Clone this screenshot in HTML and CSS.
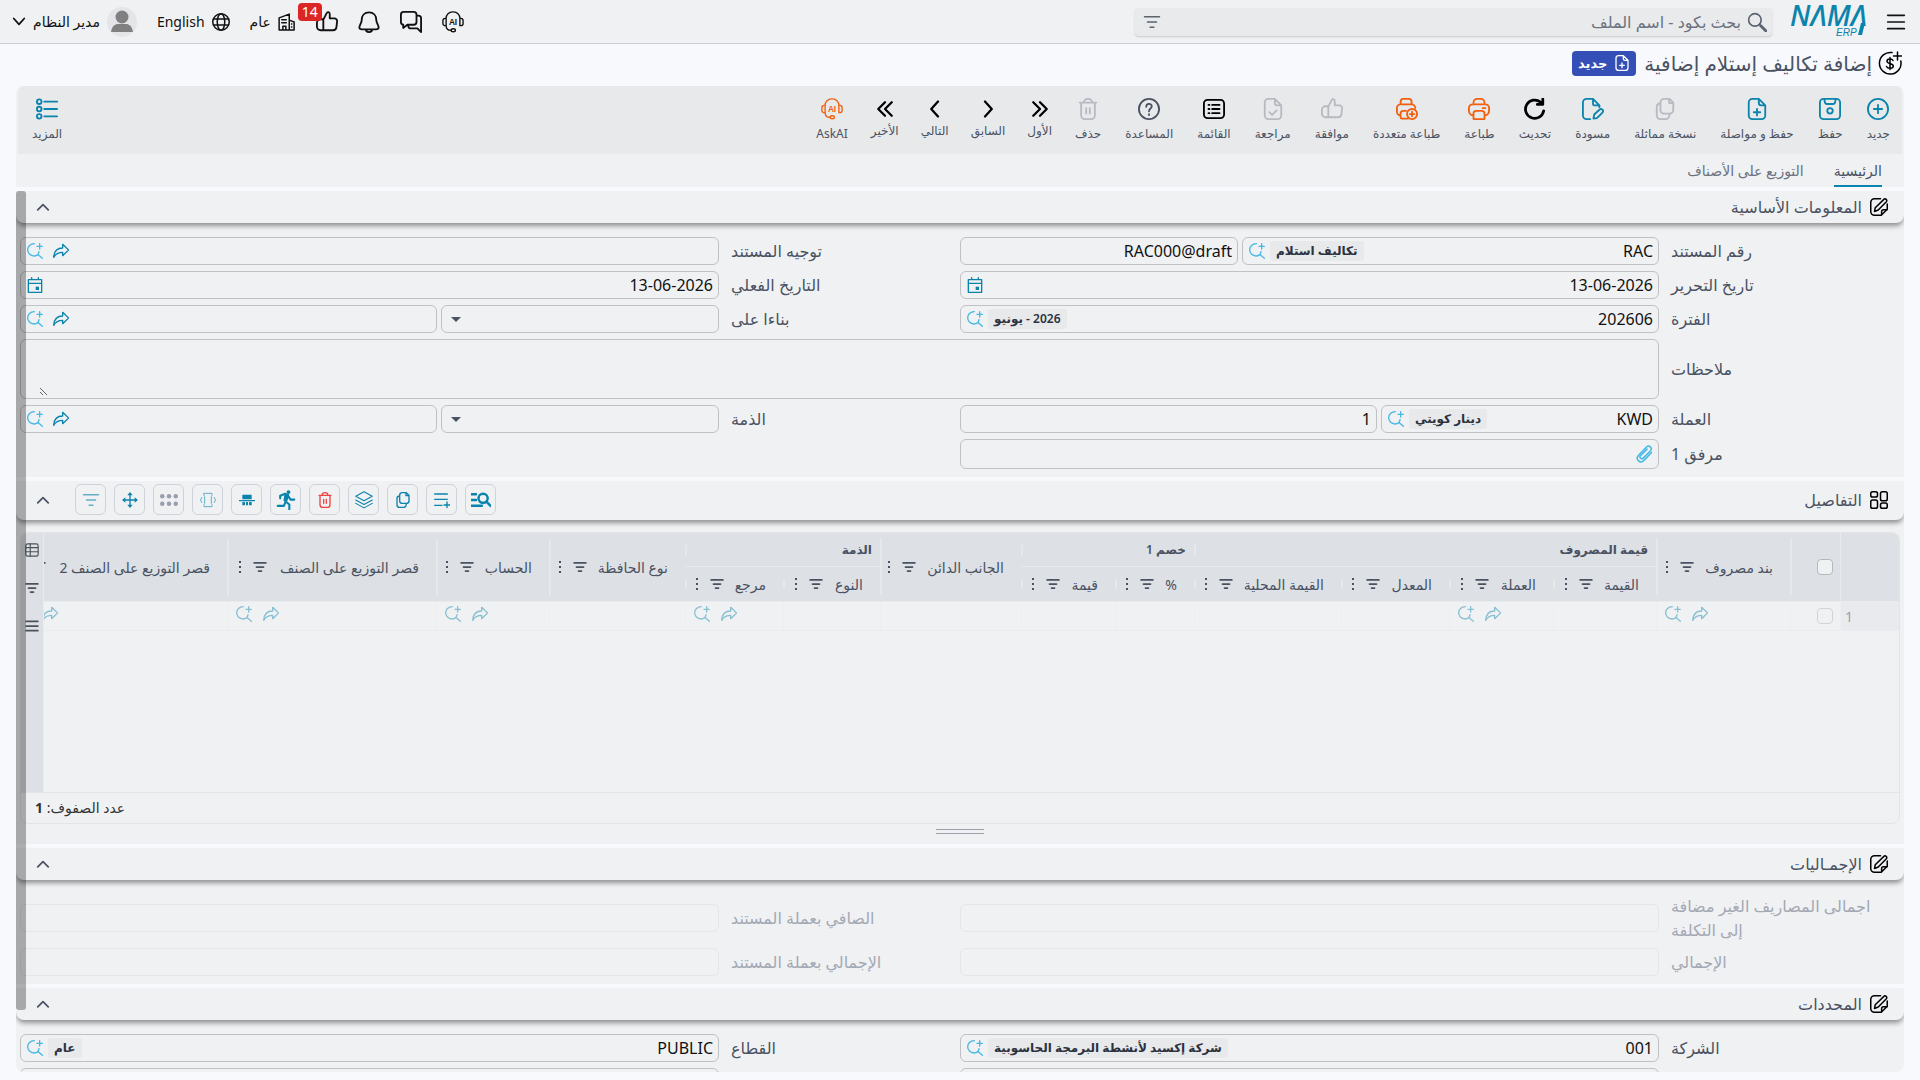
FILE: index.html
```html
<!DOCTYPE html>
<html lang="ar" dir="rtl">
<head>
  <meta charset="UTF-8" />
  <meta name="viewport" content="width=device-width, initial-scale=1" />
  <title>إضافة تكاليف إستلام إضافية</title>
  <link rel="stylesheet" href="styles.css">
</head>
<body>
  <!-- icon sprite -->
  <svg class="sprite" aria-hidden="true">
    <symbol id="i-menu" viewBox="0 0 24 24"><path d="M2 4h20M2 12h20M2 20h20" /></symbol>
    <symbol id="i-search" viewBox="0 0 24 24"><circle cx="9.500" cy="9.500" r="7.500" /><path d="M15 15l1.500 1.500" /><path d="M16.500 16.500l6 6" stroke-width="3.500" /></symbol>
    <symbol id="i-filter" viewBox="0 0 24 24"><path d="M2 5h20M6 12h12M9.500 19h5" /></symbol>
    <symbol id="i-ai" viewBox="0 0 24 24"><path d="M4.500 8.500V8a7 7 0 0 1 7-7h1a7 7 0 0 1 7 7v.500M4.500 8h-1A2.500 2.500 0 0 0 1 10.500v3A2.500 2.500 0 0 0 3.500 16h1zM19.500 8h1a2.500 2.500 0 0 1 2.500 2.500v3a2.500 2.500 0 0 1-2.500 2.500h-1zM4.500 16c0 3 2 5 5.500 5" /><ellipse cx="12.300" cy="21" rx="2.300" ry="1.700" /><text x="12" y="15" text-anchor="middle" class="ai-text">AI</text></symbol>
    <symbol id="i-chat" viewBox="0 0 24 24"><path d="M4 1h11a3 3 0 0 1 3 3v8a3 3 0 0 1-3 3H8l-4.500 3.500V15A3 3 0 0 1 1 12V4a3 3 0 0 1 3-3zM18 5h2a3 3 0 0 1 3 3v15l-4-4h-7a3 3 0 0 1-3-3v-1" /></symbol>
    <symbol id="i-bell" viewBox="0 0 24 24"><path d="M12 1.500c-5 0-8 3.500-8 8.500 0 3-2.500 5.500-2.500 8 0 1.500 1 2 3 2h15c2 0 3-.500 3-2 0-2.500-2.500-5-2.500-8 0-5-3-8.500-8-8.500zM8.500 20c0 4 7 4 7 0" /></symbol>
    <symbol id="i-thumb" viewBox="0 0 24 24"><path d="M8 9.500l3.500-7C12.500.500 15 1 15 3.500V8h5a3 3 0 0 1 3 3.500l-.700 6A4 4 0 0 1 18.500 21H5a4 4 0 0 1-4-4v-4a4 4 0 0 1 4-4h3zM8 9.500V21" /></symbol>
    <symbol id="i-building" viewBox="0 0 24 24"><path d="M1.500 22.500V6.500L15 1.500v21zM15 9.500l6.500 2.500v10.500H1.500M6.500 22.500v-5h4v5M5 9h6M5 13h6M18 14.500h.500M18 18.500h.500" /></symbol>
    <symbol id="i-globe" viewBox="0 0 24 24"><circle cx="12" cy="12" r="11" /><ellipse cx="12" cy="12" rx="5" ry="11" /><path d="M2 8h20M2 16h20" /></symbol>
    <symbol id="i-down" viewBox="0 0 24 24"><path d="M3 6l9 10 9-10" /></symbol>
    <symbol id="i-up" viewBox="0 0 24 24"><path d="M3 17l9-9 9 9" /></symbol>
    <symbol id="i-money" viewBox="0 0 24 24"><path d="M14 1.600A10.800 10.800 0 1 0 22.800 10M19.500 1v8M15.500 5h8M15 9.500c-1-2-6-2-6 .800 0 3 6.300 2 6.300 4.700 0 3-5.500 3-6.800.500M12 6.500v12" /></symbol>
    <symbol id="i-add" viewBox="0 0 24 24"><circle cx="12" cy="12" r="11" /><path d="M12 7.500v9M7.500 12h9" /></symbol>
    <symbol id="i-save" viewBox="0 0 24 24"><path d="M5 1h14a4 4 0 0 1 4 4v14a4 4 0 0 1-4 4H5a4 4 0 0 1-4-4V5a4 4 0 0 1 4-4zM6 1.500c0 4 1 5 3 5h6c2 0 3-1 3-5" /><circle cx="12" cy="14" r="3" /></symbol>
    <symbol id="i-docadd" viewBox="0 0 24 24"><path d="M14 1H7a4 4 0 0 0-4 4v14a4 4 0 0 0 4 4h10a4 4 0 0 0 4-4V8zM14 1v4.500A2.500 2.500 0 0 0 16.500 8H21M12 12v7M8.500 15.500h7" /></symbol>
    <symbol id="i-docok" viewBox="0 0 24 24"><path d="M14 1H7a4 4 0 0 0-4 4v14a4 4 0 0 0 4 4h10a4 4 0 0 0 4-4V8zM14 1v4.500A2.500 2.500 0 0 0 16.500 8H21M8 15.500l3 3 5-5" /></symbol>
    <symbol id="i-copy" viewBox="0 0 24 24"><path d="M11 1h6l4 4v8a4 4 0 0 1-4 4h-6a4 4 0 0 1-4-4V5a4 4 0 0 1 4-4zM16.500 1.500v4H21M7 6c-2.500 0-4 1.500-4 4v9a4 4 0 0 0 4 4h6c2.500 0 4-2 4-6" /></symbol>
    <symbol id="i-draft" viewBox="0 0 24 24"><path d="M19 8h-5.500A1.500 1.500 0 0 1 12 6.500V1H5a4 4 0 0 0-4 4v14a4 4 0 0 0 4 4h4M12 1l7 7v2M12.500 22.500l.800-4.500 6-5.500c2-1.500 5 1 3 3.500l-6 6z" /></symbol>
    <symbol id="i-refresh" viewBox="0 0 24 24"><path d="M21.500 14A10 10 0 1 1 18 4.500l2 1.500M20.500 1v6h-6" /></symbol>
    <symbol id="i-print" viewBox="0 0 24 24"><path d="M6 7V5a4 4 0 0 1 4-4h4a4 4 0 0 1 4 4v2M6 19a5 5 0 0 1-5-5v-3a4 4 0 0 1 4-4h14a4 4 0 0 1 4 4v3a5 5 0 0 1-5 5M9 14h6a3 3 0 0 1 3 3v5.500a.500.500 0 0 1-.500.500h-11a.500.500 0 0 1-.500-.500V17a3 3 0 0 1 3-3zM16 11h3" /></symbol>
    <symbol id="i-printadd" viewBox="0 0 24 24"><path d="M5 7V4a3 3 0 0 1 3-3h6a3 3 0 0 1 3 3v3M5 19a4 4 0 0 1-4-4v-4a4 4 0 0 1 4-4h12a4 4 0 0 1 4 4M11 14H8a3 3 0 0 0-3 3v4a1.500 1.500 0 0 0 1.500 1.500H13" /><circle cx="17.500" cy="17.500" r="5.500" /><path d="M17.500 15v5M15 17.500h5" /></symbol>
    <symbol id="i-list" viewBox="0 0 24 24"><rect x="1" y="2" width="22" height="20" rx="4" /><path d="M10 7.500h8M10 12h8M10 16.500h8M6 7.500h1M6 12h1M6 16.500h1" /></symbol>
    <symbol id="i-help" viewBox="0 0 24 24"><circle cx="12" cy="12" r="11" /><path d="M9 9.500c0-4 6-4 6-.500 0 2.500-3 2.500-3 5.500M12 17.500v1" /></symbol>
    <symbol id="i-trash" viewBox="0 0 24 24"><path d="M3 5h18M7.500 5c.300-2.700 2-4 4.500-4s4.200 1.300 4.500 4M4.500 5v14a4 4 0 0 0 4 4h7a4 4 0 0 0 4-4V5M10 11v6M14 11v6" /></symbol>
    <symbol id="i-first" viewBox="0 0 24 24"><path d="M3 3l9 9-9 9M12 3l9 9-9 9" /></symbol>
    <symbol id="i-prev" viewBox="0 0 24 24"><path d="M8 2l9 10-9 10" /></symbol>
    <symbol id="i-next" viewBox="0 0 24 24"><path d="M16 2L7 12l9 10" /></symbol>
    <symbol id="i-last" viewBox="0 0 24 24"><path d="M12 3l-9 9 9 9M21 3l-9 9 9 9" /></symbol>
    <symbol id="i-more" viewBox="0 0 24 24"><circle cx="3.500" cy="4" r="2.500" /><circle cx="3.500" cy="12" r="2.500" /><circle cx="3.500" cy="20" r="2.500" /><path d="M9 4h14M9 12h14M9 20h14" /></symbol>
    <symbol id="i-edit" viewBox="0 0 24 24"><path d="M14 1H6a5 5 0 0 0-5 5v12a5 5 0 0 0 5 5h9l8-8V8M15.500 22.500V18a2.500 2.500 0 0 1 2.500-2.500h5M6 18l1-5L18.500 1.800c2-2 5 1 3.300 3.200L11 16z" /></symbol>
    <symbol id="i-grid" viewBox="0 0 24 24"><rect x="1" y="1" width="9" height="7" rx="2.500" /><rect x="14" y="1" width="9" height="12" rx="2.500" /><rect x="1" y="12" width="9" height="11" rx="2.500" /><rect x="14" y="16" width="9" height="7" rx="2.500" /></symbol>
    <symbol id="i-lookup" viewBox="0 0 24 24"><path d="M11 1C5 1 1 5 1 10s4 9.500 9.500 9.500c4 0 7-2.500 7.500-6.500M16 17l7 6M19 1v8M15 5h8" /></symbol>
    <symbol id="i-go" viewBox="0 0 24 24"><path d="M14.500 2l9 8.500-9 8.500v-5C8 14 4 16 1 21.500c.500-8 5-14 13.500-14z" /></symbol>
    <symbol id="i-calendar" viewBox="0 0 24 24"><path d="M2 4h20v19H2zM2 9.500h20M7 1v3M17 1v3" /><rect x="13" y="14.500" width="5" height="5" class="solid" /></symbol>
    <symbol id="i-clip" viewBox="0 0 24 24"><path d="M22 10L12 20.500c-5 5-12-1-7.500-6.500L15 3c4-4 9 1 5.500 5L11 17.500c-2.500 2.500-6-1-3.500-3.500L16 5.500" /></symbol>
    <symbol id="i-finder" viewBox="0 0 24 24"><circle cx="14.500" cy="10" r="5.500" /><path d="M18.500 14l5 5M0 5h6M0 12h6M0 19h13" /></symbol>
    <symbol id="i-rowadd" viewBox="0 0 24 24"><path d="M1 3h19M1 11h19M1 20h11M19.500 15v9M15 19.500h9" /></symbol>
    <symbol id="i-layers" viewBox="0 0 24 24"><path d="M12 1l11 6-11 6L1 7zM1 12l11 6 11-6M1 16.500l11 6 11-6" /></symbol>
    <symbol id="i-run" viewBox="0 0 24 24"><circle cx="15" cy="2.500" r="2.300" class="solid" /><path d="M5 10V7l6-2.500 3.500 1.500L12 14l4 3.500V24M11.500 14l-2 5H2M14.500 7l3 4.500H22" stroke-width="2.500" /><path d="M10 5l5 1-2.500 9-3.500-2z" class="solid" /></symbol>
    <symbol id="i-split" viewBox="0 0 24 24"><path d="M5 4h14v7H5zM5 15h4v5H5zM10.500 15h3v5h-3zM15 15h4v5h-4z" class="solid" /><path d="M0 13h24" /></symbol>
    <symbol id="i-fit" viewBox="0 0 24 24"><path d="M6 2h12v3l-1 2v10l1 2v3H6v-3l1-2V7L6 5zM3 8l-2.500 4L3 16M21 8l2.500 4-2.500 4" stroke-width="1.500" /></symbol>
    <symbol id="i-dots" viewBox="0 0 24 24"><g class="solid"><circle cx="3" cy="7" r="3" /><circle cx="12" cy="7" r="3" /><circle cx="21" cy="7" r="3" /><circle cx="3" cy="17" r="3" /><circle cx="12" cy="17" r="3" /><circle cx="21" cy="17" r="3" /></g></symbol>
    <symbol id="i-move" viewBox="0 0 24 24"><path d="M12 3v18M3 12h18" /><path d="M12 0l4 5H8zM12 24l4-5H8zM0 12l5-4v8zM24 12l-5-4v8z" class="solid" /></symbol>
    <symbol id="i-kebab" viewBox="0 0 4 14"><g class="solid"><rect x="1" y="1" width="2" height="2" /><rect x="1" y="6" width="2" height="2" /><rect x="1" y="11" width="2" height="2" /></g></symbol>
    <symbol id="i-columns" viewBox="0 0 24 24"><rect x="1.500" y="1.500" width="21" height="21" rx="3" /><path d="M1.500 8h21M9 1.500v21M1.500 15h21" /></symbol>
  </svg>

  <header class="topbar">
    <button class="icon-btn" aria-label="القائمة الرئيسية"><svg class="icon burger"><use href="#i-menu" /></svg></button>
    <a class="logo" href="#" aria-label="NAMA ERP">
      <svg viewBox="0 0 80 28" direction="ltr">
        <text x="0" y="18" class="logo-name">NΛMΛ</text>
        <path d="M71 15h4l-3 12h-4z" />
        <text x="46" y="28" class="logo-sub">ERP</text>
      </svg>
    </a>
    <div class="search">
      <svg class="icon s20"><use href="#i-search" /></svg>
      <input type="text" aria-label="بحث" placeholder="بحث بكود - اسم الملف">
      <button class="icon-btn" aria-label="تصفية"><svg class="icon s18"><use href="#i-filter" /></svg></button>
    </div>
    <nav class="top-actions">
      <button class="icon-btn" aria-label="AI"><svg class="icon s22 thin"><use href="#i-ai" /></svg></button>
      <button class="icon-btn" aria-label="المحادثات"><svg class="icon s22"><use href="#i-chat" /></svg></button>
      <button class="icon-btn" aria-label="التنبيهات"><svg class="icon s22"><use href="#i-bell" /></svg></button>
      <button class="icon-btn likes" aria-label="الموافقات"><svg class="icon s22"><use href="#i-thumb" /></svg><span class="count">14</span></button>
      <button class="top-item"><svg class="icon s18"><use href="#i-building" /></svg>عام</button>
      <button class="top-item"><svg class="icon s18"><use href="#i-globe" /></svg>English</button>
      <button class="top-item">
        <span class="avatar"><svg viewBox="0 0 30 30"><circle cx="15" cy="10" r="6.500" /><path d="M4 25c1-6 4-8 7-8h8c3 0 6 2 7 8z" /></svg></span>
        مدير النظام
        <svg class="icon s14 bold"><use href="#i-down" /></svg>
      </button>
    </nav>
  </header>

  <div class="title-row">
    <svg class="icon s24 thin"><use href="#i-money" /></svg>
    <h1>إضافة تكاليف إستلام إضافية</h1>
    <span class="state"><svg class="icon s16"><use href="#i-docadd" /></svg>جديد</span>
  </div>

  <main class="page">
    <div class="toolbar">
      <button class="tool teal"><svg class="icon s22"><use href="#i-add" /></svg>جديد</button>
      <button class="tool teal"><svg class="icon s22"><use href="#i-save" /></svg>حفظ</button>
      <button class="tool teal"><svg class="icon s22"><use href="#i-docadd" /></svg>حفظ و مواصلة</button>
      <button class="tool off"><svg class="icon s22"><use href="#i-copy" /></svg>نسخة مماثلة</button>
      <button class="tool teal"><svg class="icon s22"><use href="#i-draft" /></svg>مسودة</button>
      <button class="tool"><svg class="icon s22 bold"><use href="#i-refresh" /></svg>تحديث</button>
      <button class="tool orange"><svg class="icon s22"><use href="#i-print" /></svg>طباعة</button>
      <button class="tool orange"><svg class="icon s22"><use href="#i-printadd" /></svg>طباعة متعددة</button>
      <button class="tool off"><svg class="icon s22"><use href="#i-thumb" /></svg>موافقة</button>
      <button class="tool off"><svg class="icon s22"><use href="#i-docok" /></svg>مراجعة</button>
      <button class="tool"><svg class="icon s22"><use href="#i-list" /></svg>القائمة</button>
      <button class="tool grey"><svg class="icon s22"><use href="#i-help" /></svg>المساعدة</button>
      <button class="tool off"><svg class="icon s22"><use href="#i-trash" /></svg>حذف</button>
      <button class="tool nav"><svg class="icon s18 bold"><use href="#i-first" /></svg>الأول</button>
      <button class="tool nav"><svg class="icon s18 bold"><use href="#i-prev" /></svg>السابق</button>
      <button class="tool nav"><svg class="icon s18 bold"><use href="#i-next" /></svg>التالي</button>
      <button class="tool nav"><svg class="icon s18 bold"><use href="#i-last" /></svg>الأخير</button>
      <button class="tool orange"><svg class="icon s22 thin"><use href="#i-ai" /></svg>AskAI</button>
      <button class="tool teal more"><svg class="icon s22"><use href="#i-more" /></svg>المزيد</button>
    </div>

    <nav class="tabs">
      <a href="#" class="tab active">الرئيسية</a>
      <a href="#" class="tab">التوزيع على الأصناف</a>
    </nav>

    <div class="scroller">
      <section class="section">
        <div class="section-head">
          <svg class="icon s18"><use href="#i-edit" /></svg>
          <h2>المعلومات الأساسية</h2>
          <button class="icon-btn collapse" aria-label="طي"><svg class="icon s14"><use href="#i-up" /></svg></button>
        </div>
        <div class="form">
          <div class="row">
            <label for="book">رقم المستند</label>
            <div class="fields">
              <div class="box wide"><input id="book" type="text" value="RAC"><span class="chip">تكاليف استلام</span><button class="icon-btn sky" aria-label="بحث"><svg class="icon s16"><use href="#i-lookup" /></svg></button></div>
              <div class="box"><input type="text" aria-label="كود المستند" value="RAC000@draft"></div>
            </div>
          </div>
          <div class="row">
            <label for="term">توجيه المستند</label>
            <div class="fields">
              <div class="box"><input id="term" type="text"><button class="icon-btn teal" aria-label="فتح"><svg class="icon s16"><use href="#i-go" /></svg></button><button class="icon-btn sky" aria-label="بحث"><svg class="icon s16"><use href="#i-lookup" /></svg></button></div>
            </div>
          </div>
          <div class="row">
            <label for="issue">تاريخ التحرير</label>
            <div class="fields">
              <div class="box"><input id="issue" type="text" value="13-06-2026"><button class="icon-btn teal" aria-label="التقويم"><svg class="icon s16"><use href="#i-calendar" /></svg></button></div>
            </div>
          </div>
          <div class="row">
            <label for="actual">التاريخ الفعلي</label>
            <div class="fields">
              <div class="box"><input id="actual" type="text" value="13-06-2026"><button class="icon-btn teal" aria-label="التقويم"><svg class="icon s16"><use href="#i-calendar" /></svg></button></div>
            </div>
          </div>
          <div class="row">
            <label for="period">الفترة</label>
            <div class="fields">
              <div class="box"><input id="period" type="text" value="202606"><span class="chip">2026 - يونيو</span><button class="icon-btn sky" aria-label="بحث"><svg class="icon s16"><use href="#i-lookup" /></svg></button></div>
            </div>
          </div>
          <div class="row">
            <label for="from">بناءا على</label>
            <div class="fields">
              <div class="box drop"><select id="from"><option></option></select></div>
              <div class="box wide"><input type="text" aria-label="كود المصدر"><button class="icon-btn teal" aria-label="فتح"><svg class="icon s16"><use href="#i-go" /></svg></button><button class="icon-btn sky" aria-label="بحث"><svg class="icon s16"><use href="#i-lookup" /></svg></button></div>
            </div>
          </div>
          <div class="row full">
            <label for="notes">ملاحظات</label>
            <div class="fields">
              <div class="box area"><textarea id="notes"></textarea></div>
            </div>
          </div>
          <div class="row">
            <label for="currency">العملة</label>
            <div class="fields">
              <div class="box"><input id="currency" type="text" value="KWD"><span class="chip">دينار كويتي</span><button class="icon-btn sky" aria-label="بحث"><svg class="icon s16"><use href="#i-lookup" /></svg></button></div>
              <div class="box wide"><input type="text" aria-label="المعدل" value="1"></div>
            </div>
          </div>
          <div class="row">
            <label for="subsidiary">الذمة</label>
            <div class="fields">
              <div class="box drop"><select id="subsidiary"><option></option></select></div>
              <div class="box wide"><input type="text" aria-label="كود الذمة"><button class="icon-btn teal" aria-label="فتح"><svg class="icon s16"><use href="#i-go" /></svg></button><button class="icon-btn sky" aria-label="بحث"><svg class="icon s16"><use href="#i-lookup" /></svg></button></div>
            </div>
          </div>
          <div class="row">
            <label for="attach">مرفق 1</label>
            <div class="fields">
              <div class="box attach"><button id="attach" class="icon-btn sky" aria-label="إرفاق"><svg class="icon s18"><use href="#i-clip" /></svg></button></div>
            </div>
          </div>
        </div>
      </section>

      <section class="section">
        <div class="section-head tall">
          <svg class="icon s18"><use href="#i-grid" /></svg>
          <h2>التفاصيل</h2>
          <div class="grid-tools">
            <button class="sq" aria-label="بحث"><svg class="icon s20 bold"><use href="#i-finder" /></svg></button>
            <button class="sq" aria-label="سطر جديد"><svg class="icon s16"><use href="#i-rowadd" /></svg></button>
            <button class="sq" aria-label="نسخ"><svg class="icon s16"><use href="#i-copy" /></svg></button>
            <button class="sq" aria-label="طبقات"><svg class="icon s18 thin"><use href="#i-layers" /></svg></button>
            <button class="sq red" aria-label="حذف"><svg class="icon s16"><use href="#i-trash" /></svg></button>
            <button class="sq" aria-label="تشغيل"><svg class="icon s20"><use href="#i-run" /></svg></button>
            <button class="sq" aria-label="تقسيم"><svg class="icon s16"><use href="#i-split" /></svg></button>
            <button class="sq dim" aria-label="ملاءمة"><svg class="icon s16"><use href="#i-fit" /></svg></button>
            <button class="sq mute" aria-label="خيارات"><svg class="icon s18"><use href="#i-dots" /></svg></button>
            <button class="sq" aria-label="نقل"><svg class="icon s16"><use href="#i-move" /></svg></button>
            <button class="sq dim" aria-label="تصفية"><svg class="icon s18"><use href="#i-filter" /></svg></button>
          </div>
          <button class="icon-btn collapse" aria-label="طي"><svg class="icon s14"><use href="#i-up" /></svg></button>
        </div>
        <div class="grid-wrap">
          <div class="grid">
            <div class="grid-main">
              <div class="grid-view">
                <table>
                  <colgroup>
                    <col class="c-num"><col class="c-check"><col class="c-item"><col class="c-value"><col class="c-currency"><col class="c-rate"><col class="c-local"><col class="c-percent"><col class="c-disc"><col class="c-credit"><col class="c-type"><col class="c-ref"><col class="c-folder"><col class="c-account"><col class="c-limit"><col class="c-limit2">
                  </colgroup>
                  <thead>
                    <tr>
                      <th rowspan="2" class="num" aria-label="رقم"></th>
                      <th rowspan="2" class="check"><input type="checkbox" aria-label="تحديد الكل"></th>
                      <th rowspan="2" class="col"><div class="th"><span>بند مصروف</span><svg class="icon s14"><use href="#i-filter" /></svg><svg class="kebab"><use href="#i-kebab" /></svg></div></th>
                      <th colspan="4" class="group">قيمة المصروف</th>
                      <th colspan="2" class="group">خصم 1</th>
                      <th rowspan="2" class="col"><div class="th"><span>الجانب الدائن</span><svg class="icon s14"><use href="#i-filter" /></svg><svg class="kebab"><use href="#i-kebab" /></svg></div></th>
                      <th colspan="2" class="group">الذمة</th>
                      <th rowspan="2" class="col"><div class="th"><span>نوع الحافظة</span><svg class="icon s14"><use href="#i-filter" /></svg><svg class="kebab"><use href="#i-kebab" /></svg></div></th>
                      <th rowspan="2" class="col"><div class="th"><span>الحساب</span><svg class="icon s14"><use href="#i-filter" /></svg><svg class="kebab"><use href="#i-kebab" /></svg></div></th>
                      <th rowspan="2" class="col"><div class="th"><span>قصر التوزيع على الصنف</span><svg class="icon s14"><use href="#i-filter" /></svg><svg class="kebab"><use href="#i-kebab" /></svg></div></th>
                      <th rowspan="2" class="col"><div class="th"><span>قصر التوزيع على الصنف 2</span><svg class="icon s14"><use href="#i-filter" /></svg><svg class="kebab"><use href="#i-kebab" /></svg></div></th>
                    </tr>
                    <tr>
                      <th class="sub"><div class="th"><span>القيمة</span><svg class="icon s14"><use href="#i-filter" /></svg><svg class="kebab"><use href="#i-kebab" /></svg></div></th>
                      <th class="sub"><div class="th"><span>العملة</span><svg class="icon s14"><use href="#i-filter" /></svg><svg class="kebab"><use href="#i-kebab" /></svg></div></th>
                      <th class="sub"><div class="th"><span>المعدل</span><svg class="icon s14"><use href="#i-filter" /></svg><svg class="kebab"><use href="#i-kebab" /></svg></div></th>
                      <th class="sub"><div class="th"><span>القيمة المحلية</span><svg class="icon s14"><use href="#i-filter" /></svg><svg class="kebab"><use href="#i-kebab" /></svg></div></th>
                      <th class="sub"><div class="th"><span>%</span><svg class="icon s14"><use href="#i-filter" /></svg><svg class="kebab"><use href="#i-kebab" /></svg></div></th>
                      <th class="sub"><div class="th"><span>قيمة</span><svg class="icon s14"><use href="#i-filter" /></svg><svg class="kebab"><use href="#i-kebab" /></svg></div></th>
                      <th class="sub"><div class="th"><span>النوع</span><svg class="icon s14"><use href="#i-filter" /></svg><svg class="kebab"><use href="#i-kebab" /></svg></div></th>
                      <th class="sub"><div class="th"><span>مرجع</span><svg class="icon s14"><use href="#i-filter" /></svg><svg class="kebab"><use href="#i-kebab" /></svg></div></th>
                    </tr>
                  </thead>
                  <tbody>
                    <tr>
                      <td class="num">1</td>
                      <td class="check"><input type="checkbox" aria-label="تحديد السطر"></td>
                      <td><div class="ref"><svg class="icon s16"><use href="#i-go" /></svg><svg class="icon s16"><use href="#i-lookup" /></svg></div></td>
                      <td></td>
                      <td><div class="ref"><svg class="icon s16"><use href="#i-go" /></svg><svg class="icon s16"><use href="#i-lookup" /></svg></div></td>
                      <td></td>
                      <td></td>
                      <td></td>
                      <td></td>
                      <td></td>
                      <td></td>
                      <td><div class="ref"><svg class="icon s16"><use href="#i-go" /></svg><svg class="icon s16"><use href="#i-lookup" /></svg></div></td>
                      <td></td>
                      <td><div class="ref"><svg class="icon s16"><use href="#i-go" /></svg><svg class="icon s16"><use href="#i-lookup" /></svg></div></td>
                      <td><div class="ref"><svg class="icon s16"><use href="#i-go" /></svg><svg class="icon s16"><use href="#i-lookup" /></svg></div></td>
                      <td><div class="ref"><svg class="icon s16"><use href="#i-go" /></svg><svg class="icon s16"><use href="#i-lookup" /></svg></div></td>
                    </tr>
                  </tbody>
                </table>
              </div>
              <div class="side-bar">
                <button class="icon-btn" aria-label="الأعمدة"><svg class="icon s14"><use href="#i-columns" /></svg></button>
                <button class="icon-btn" aria-label="التصفية"><svg class="icon s14 bold"><use href="#i-filter" /></svg></button>
                <button class="icon-btn" aria-label="القائمة"><svg class="icon s14 bold"><use href="#i-menu" /></svg></button>
              </div>
            </div>
            <div class="grid-foot">عدد الصفوف: <b>1</b></div>
          </div>
          <div class="handle"></div>
        </div>
      </section>

      <section class="section">
        <div class="section-head">
          <svg class="icon s18"><use href="#i-edit" /></svg>
          <h2>الإجمـاليات</h2>
          <button class="icon-btn collapse" aria-label="طي"><svg class="icon s14"><use href="#i-up" /></svg></button>
        </div>
        <div class="form disabled">
          <div class="row"><label for="t1">اجمالى المصاريف الغير مضافة إلى التكلفة</label><div class="fields"><div class="box"><input id="t1" type="text" disabled></div></div></div>
          <div class="row"><label for="t2">الصافي بعملة المستند</label><div class="fields"><div class="box"><input id="t2" type="text" disabled></div></div></div>
          <div class="row"><label for="t3">الإجمالي</label><div class="fields"><div class="box"><input id="t3" type="text" disabled></div></div></div>
          <div class="row"><label for="t4">الإجمالي بعملة المستند</label><div class="fields"><div class="box"><input id="t4" type="text" disabled></div></div></div>
        </div>
      </section>

      <section class="section">
        <div class="section-head">
          <svg class="icon s18"><use href="#i-edit" /></svg>
          <h2>المحددات</h2>
          <button class="icon-btn collapse" aria-label="طي"><svg class="icon s14"><use href="#i-up" /></svg></button>
        </div>
        <div class="form">
          <div class="row">
            <label for="company">الشركة</label>
            <div class="fields"><div class="box"><input id="company" type="text" value="001"><span class="chip">شركة إكسيد لأنشطة البرمجة الحاسوبية</span><button class="icon-btn sky" aria-label="بحث"><svg class="icon s16"><use href="#i-lookup" /></svg></button></div></div>
          </div>
          <div class="row">
            <label for="sector">القطاع</label>
            <div class="fields"><div class="box"><input id="sector" type="text" value="PUBLIC"><span class="chip">عام</span><button class="icon-btn sky" aria-label="بحث"><svg class="icon s16"><use href="#i-lookup" /></svg></button></div></div>
          </div>
          <div class="row bare"><div class="fields"><div class="box"></div></div></div>
          <div class="row bare"><div class="fields"><div class="box"></div></div></div>
        </div>
      </section>
      <div class="scroll-thumb"></div>
    </div>
  </main>
</body>
</html>
```

FILE: styles.css
```css
* {
  margin: 0;
  padding: 0;
  box-sizing: border-box;
}

body {
  font-family: "Noto Sans", "DejaVu Sans", sans-serif;
  font-size: 16px;
  color: #4a5262;
  background: #f8f9fc;
  height: 100vh;
  display: flex;
  flex-direction: column;
  overflow: hidden;
}

button, input, select, textarea {
  font: inherit;
  color: inherit;
  background: none;
  border: none;
  outline: none;
}

button {
  cursor: pointer;
}

.sprite {
  display: none;
}

.icon {
  fill: none;
  stroke: currentColor;
  stroke-width: 2;
  stroke-linecap: round;
  stroke-linejoin: round;
  flex-shrink: 0;
  display: block;
}

.thin { stroke-width: 1.5; }
.bold { stroke-width: 3; }
.s14 { width: 14px; height: 14px; }
.s16 { width: 16px; height: 16px; }
.s18 { width: 18px; height: 18px; }
.s20 { width: 20px; height: 20px; }
.s22 { width: 22px; height: 22px; }
.s24 { width: 24px; height: 24px; }

.solid {
  fill: currentColor;
  stroke: none;
}

.ai-text {
  font: bold 9px "Liberation Sans", sans-serif;
  fill: currentColor;
  stroke: none;
}

.icon-btn {
  display: flex;
  align-items: center;
}

.teal { color: #0b84ad; }
.sky { color: #45b8e4; }
.orange { color: #f2600f; }

/* top bar */
.topbar {
  display: flex;
  align-items: center;
  flex-shrink: 0;
  height: 44px;
  padding: 0 14px 0 12px;
  background: #f0f1f3;
  border-bottom: 1px solid #ccced1;
  color: #111;
}

.burger {
  width: 20px;
  height: 20px;
}

.logo {
  width: 80px;
  margin: 0 16px 0 18px;
}

.logo svg {
  display: block;
  overflow: visible;
  fill: #0b84ad;
}

.logo-name {
  font: italic 600 28px "Open Sans", sans-serif;
}

.logo-sub {
  font: italic 10px "Liberation Sans", sans-serif;
}

.search {
  display: flex;
  align-items: center;
  gap: 6px;
  width: calc(33% + 12px);
  height: 28px;
  padding: 0 5px 0 8px;
  background: #e9eaec;
  border-radius: 4px;
  box-shadow: 0 1px 2px #c8cacd;
  color: #5b6270;
}

.search input {
  flex: 1;
  min-width: 0;
}

.search input::placeholder {
  color: #6b7280;
}

.top-actions {
  display: flex;
  align-items: center;
  gap: 20px;
  margin-right: auto;
  font-size: 14px;
}

.top-item {
  display: flex;
  align-items: center;
  gap: 7px;
}

.likes {
  position: relative;
}

.count {
  position: absolute;
  top: -8px;
  right: 16px;
  padding: 0 4px;
  line-height: 18px;
  border-radius: 4px;
  background: #dc2626;
  color: #fff;
}

.avatar {
  width: 30px;
  height: 30px;
  border-radius: 50%;
  overflow: hidden;
  background: #e4e5e8;
}

.avatar svg {
  display: block;
  fill: #808080;
}

/* title */
.title-row {
  display: flex;
  align-items: center;
  flex-shrink: 0;
  gap: 6px;
  height: 42px;
  padding: 0 18px 4px;
}

.title-row > .icon {
  color: #000;
}

h1 {
  font-size: 20px;
  font-weight: 400;
}

.state {
  display: flex;
  align-items: center;
  gap: 7px;
  height: 25px;
  margin-right: 2px;
  padding: 0 6px;
  border-radius: 4px;
  background: #344fb5;
  color: #fff;
  font-size: 13px;
  font-weight: 600;
}

/* page */
.page {
  flex: 1;
  min-height: 0;
  display: flex;
  flex-direction: column;
  margin: 0 16px 8px;
}

.toolbar {
  display: flex;
  align-items: flex-start;
  flex-shrink: 0;
  gap: 24px;
  height: 68px;
  padding: 12px 12px 0 14px;
  border: solid #f0f1f3;
  border-width: 0 2px;
  border-radius: 8px 8px 0 0;
  background: #e8e9eb;
}

.tool {
  display: flex;
  flex-direction: column;
  align-items: center;
  gap: 5px;
  font-size: 12px;
  line-height: 18px;
  white-space: nowrap;
  color: #4a5262;
}

.tool .icon { color: #000; }
.tool.teal .icon { color: #0b84ad; }
.tool.orange .icon { color: #f2600f; }
.tool.grey .icon { color: #4a5262; }
.tool.off .icon { color: #b8bac2; }

.tool.nav {
  margin: 0 -1px;
  padding-top: 2px;
  gap: 4px;
}

.more {
  margin-right: auto;
}

.tabs {
  display: flex;
  flex-shrink: 0;
  gap: 30px;
  height: 33px;
  padding: 0 22px;
  background: #f0f1f3;
}

.tab {
  padding-top: 2px;
  font-size: 14px;
  line-height: 29px;
  color: #6b7280;
  text-decoration: none;
}

.tab.active {
  color: #4a5262;
  border-bottom: 2px solid #0b84ad;
}

.scroller {
  flex: 1;
  min-height: 0;
  position: relative;
  margin-top: 4px;
  overflow: hidden;
  border-radius: 0 0 8px 8px;
}

.scroll-thumb {
  position: absolute;
  top: 0;
  left: 0;
  width: 10px;
  height: 93%;
  border-radius: 3px;
  background: rgba(0, 0, 0, 0.3);
}

.section {
  margin-bottom: 4px;
  background: #f0f1f3;
}

.section-head {
  display: flex;
  align-items: center;
  gap: 8px;
  height: 32px;
  padding: 0 16px 0 20px;
  border-radius: 0 0 8px 8px;
  box-shadow: 0 4px 5px -1px rgba(0, 0, 0, 0.4);
}

.section-head.tall {
  height: 39px;
  padding-bottom: 2px;
}

.section-head > .icon {
  color: #000;
}

h2 {
  font-size: 16px;
  font-weight: 400;
}

.collapse {
  margin-right: auto;
}

.collapse .icon {
  stroke-width: 3;
}

/* form */
.form {
  display: grid;
  grid-template-columns: 1fr 1fr;
  row-gap: 6px;
  padding: 14px 4px 8px;
}

.row {
  display: flex;
  align-items: center;
}

.row.full {
  grid-column: 1 / -1;
}

.row label {
  width: 25%;
  padding: 0 20px 0 6px;
  line-height: 24px;
  text-align: left;
}

.row.full label {
  width: calc(25% / 2);
}

.fields {
  flex: 1;
  min-width: 0;
  display: flex;
  gap: 4px;
  padding-right: 6px;
}

.row.bare .fields {
  margin-right: 25%;
}

.box {
  flex: 1 1 40%;
  min-width: 0;
  display: flex;
  align-items: center;
  gap: 10px;
  height: 28px;
  padding: 0 5px 0 6px;
  border: 1px solid #bfc1c4;
  border-radius: 6px;
  color: #111;
}

.box.wide { flex-basis: 60%; }

.box input {
  flex: 1;
  min-width: 0;
  height: 26px;
}

.box .icon-btn.teal { color: #0b84ad; }
.box .icon-btn.sky { color: #45b8e4; }

.chip {
  margin-left: -5px;
  padding: 0 6px;
  line-height: 20px;
  border-radius: 3px;
  background: #e8e9eb;
  color: #2b3240;
  font-size: 12px;
  font-weight: 600;
}

.box.drop {
  position: relative;
  padding: 0;
}

.drop select {
  width: 100%;
  height: 26px;
  appearance: none;
}

.drop::after {
  content: "";
  position: absolute;
  left: 9px;
  top: 11px;
  border: 5px solid transparent;
  border-top-color: #4a5262;
  border-bottom: 0;
  pointer-events: none;
}

.box.area {
  height: 60px;
  padding: 2px 5px 2px 18px;
}

.area textarea {
  flex: 1;
  height: 54px;
}

.box.attach {
  height: 30px;
}

.disabled label {
  color: #a3a8b4;
}

.disabled .box {
  border-color: #e4e6e9;
}

/* grid */
.grid-tools {
  display: flex;
  gap: 8px;
  margin-right: auto;
}

.grid-tools + .collapse {
  margin-right: 17px;
}

.sq {
  display: flex;
  align-items: center;
  justify-content: center;
  width: 31px;
  height: 31px;
  border: 1px solid #cfd2da;
  border-radius: 6px;
  color: #0b84ad;
}

.sq.red { color: #ef4444; }
.sq.mute { color: #9a9fad; }
.sq.dim .icon { opacity: 0.6; }

.grid-wrap {
  padding: 12px 4px 10px;
}

.grid {
  border: 1px solid #e2e4e7;
  border-radius: 8px;
  overflow: hidden;
}

.grid-main {
  display: flex;
  height: 259px;
}

.grid-view {
  flex: 1;
  min-width: 0;
  overflow: hidden;
}

.side-bar {
  width: 23px;
  display: flex;
  flex-direction: column;
  align-items: center;
  gap: 24px;
  padding-top: 10px;
  background: #dde0e5;
  border-right: 1px solid #e8eaec;
  color: #4d5259;
}

table {
  width: 1893px;
  table-layout: fixed;
  border-collapse: separate;
  border-spacing: 0;
  font-size: 14px;
}

.c-num { width: 59px; }
.c-check { width: 50px; }
.c-item { width: 134px; }
.c-value { width: 103px; }
.c-currency { width: 104px; }
.c-rate { width: 108px; }
.c-local { width: 147px; }
.c-percent { width: 79px; }
.c-disc { width: 94px; }
.c-credit { width: 141px; }
.c-type { width: 97px; }
.c-ref { width: 98px; }
.c-folder { width: 136px; }
.c-account { width: 113px; }
.c-limit { width: 209px; }
.c-limit2 { width: 221px; }

th {
  height: 34px;
  background: linear-gradient(#e8e8ea, #e8e8ea) left center / 2px 10px no-repeat #dde0e5;
  font-weight: 400;
  text-align: right;
  white-space: nowrap;
}

th.col, th.check {
  background-size: 2px 56px;
}

th.num {
  background: #dde0e5;
  border-left: 1px solid #e8eaec;
}

th.group {
  padding: 0 8px;
  border-bottom: 1px solid #e8eaec;
  font-size: 12px;
  font-weight: 600;
}

.th {
  display: flex;
  align-items: center;
  gap: 11px;
  padding: 0 17px 0 11px;
}

.th span {
  margin-left: auto;
}

.th .icon { stroke-width: 3; }

.kebab {
  flex-shrink: 0;
  width: 4px;
  height: 14px;
}

td {
  height: 30px;
  border-top: 1px solid #e8eaec;
  border-bottom: 1px solid #eaecee;
  border-left: 1px solid #eceef0;
}

td.num {
  padding-left: 4px;
  background: #e8eaee;
  text-align: left;
  color: #9aa0ab;
}

.check {
  padding-right: 7px;
}

.check input {
  appearance: none;
  display: block;
  width: 16px;
  height: 16px;
  border: 1px solid #b4b7bd;
  border-radius: 4px;
  background: #f0f1f3;
}

td.check input {
  opacity: 0.5;
}

.ref {
  display: flex;
  justify-content: flex-end;
  gap: 11px;
  padding: 0 0 4px 8px;
  color: #0b84ad;
  opacity: 0.45;
}

.grid-foot {
  height: 31px;
  padding: 0 14px;
  border-top: 1px solid #e2e4e7;
  font-size: 14px;
  line-height: 30px;
  text-align: left;
  color: #333;
}

.handle {
  width: 48px;
  height: 5px;
  margin: 5px auto 0;
  border: solid #9aa0ab;
  border-width: 1px 0;
}
```
